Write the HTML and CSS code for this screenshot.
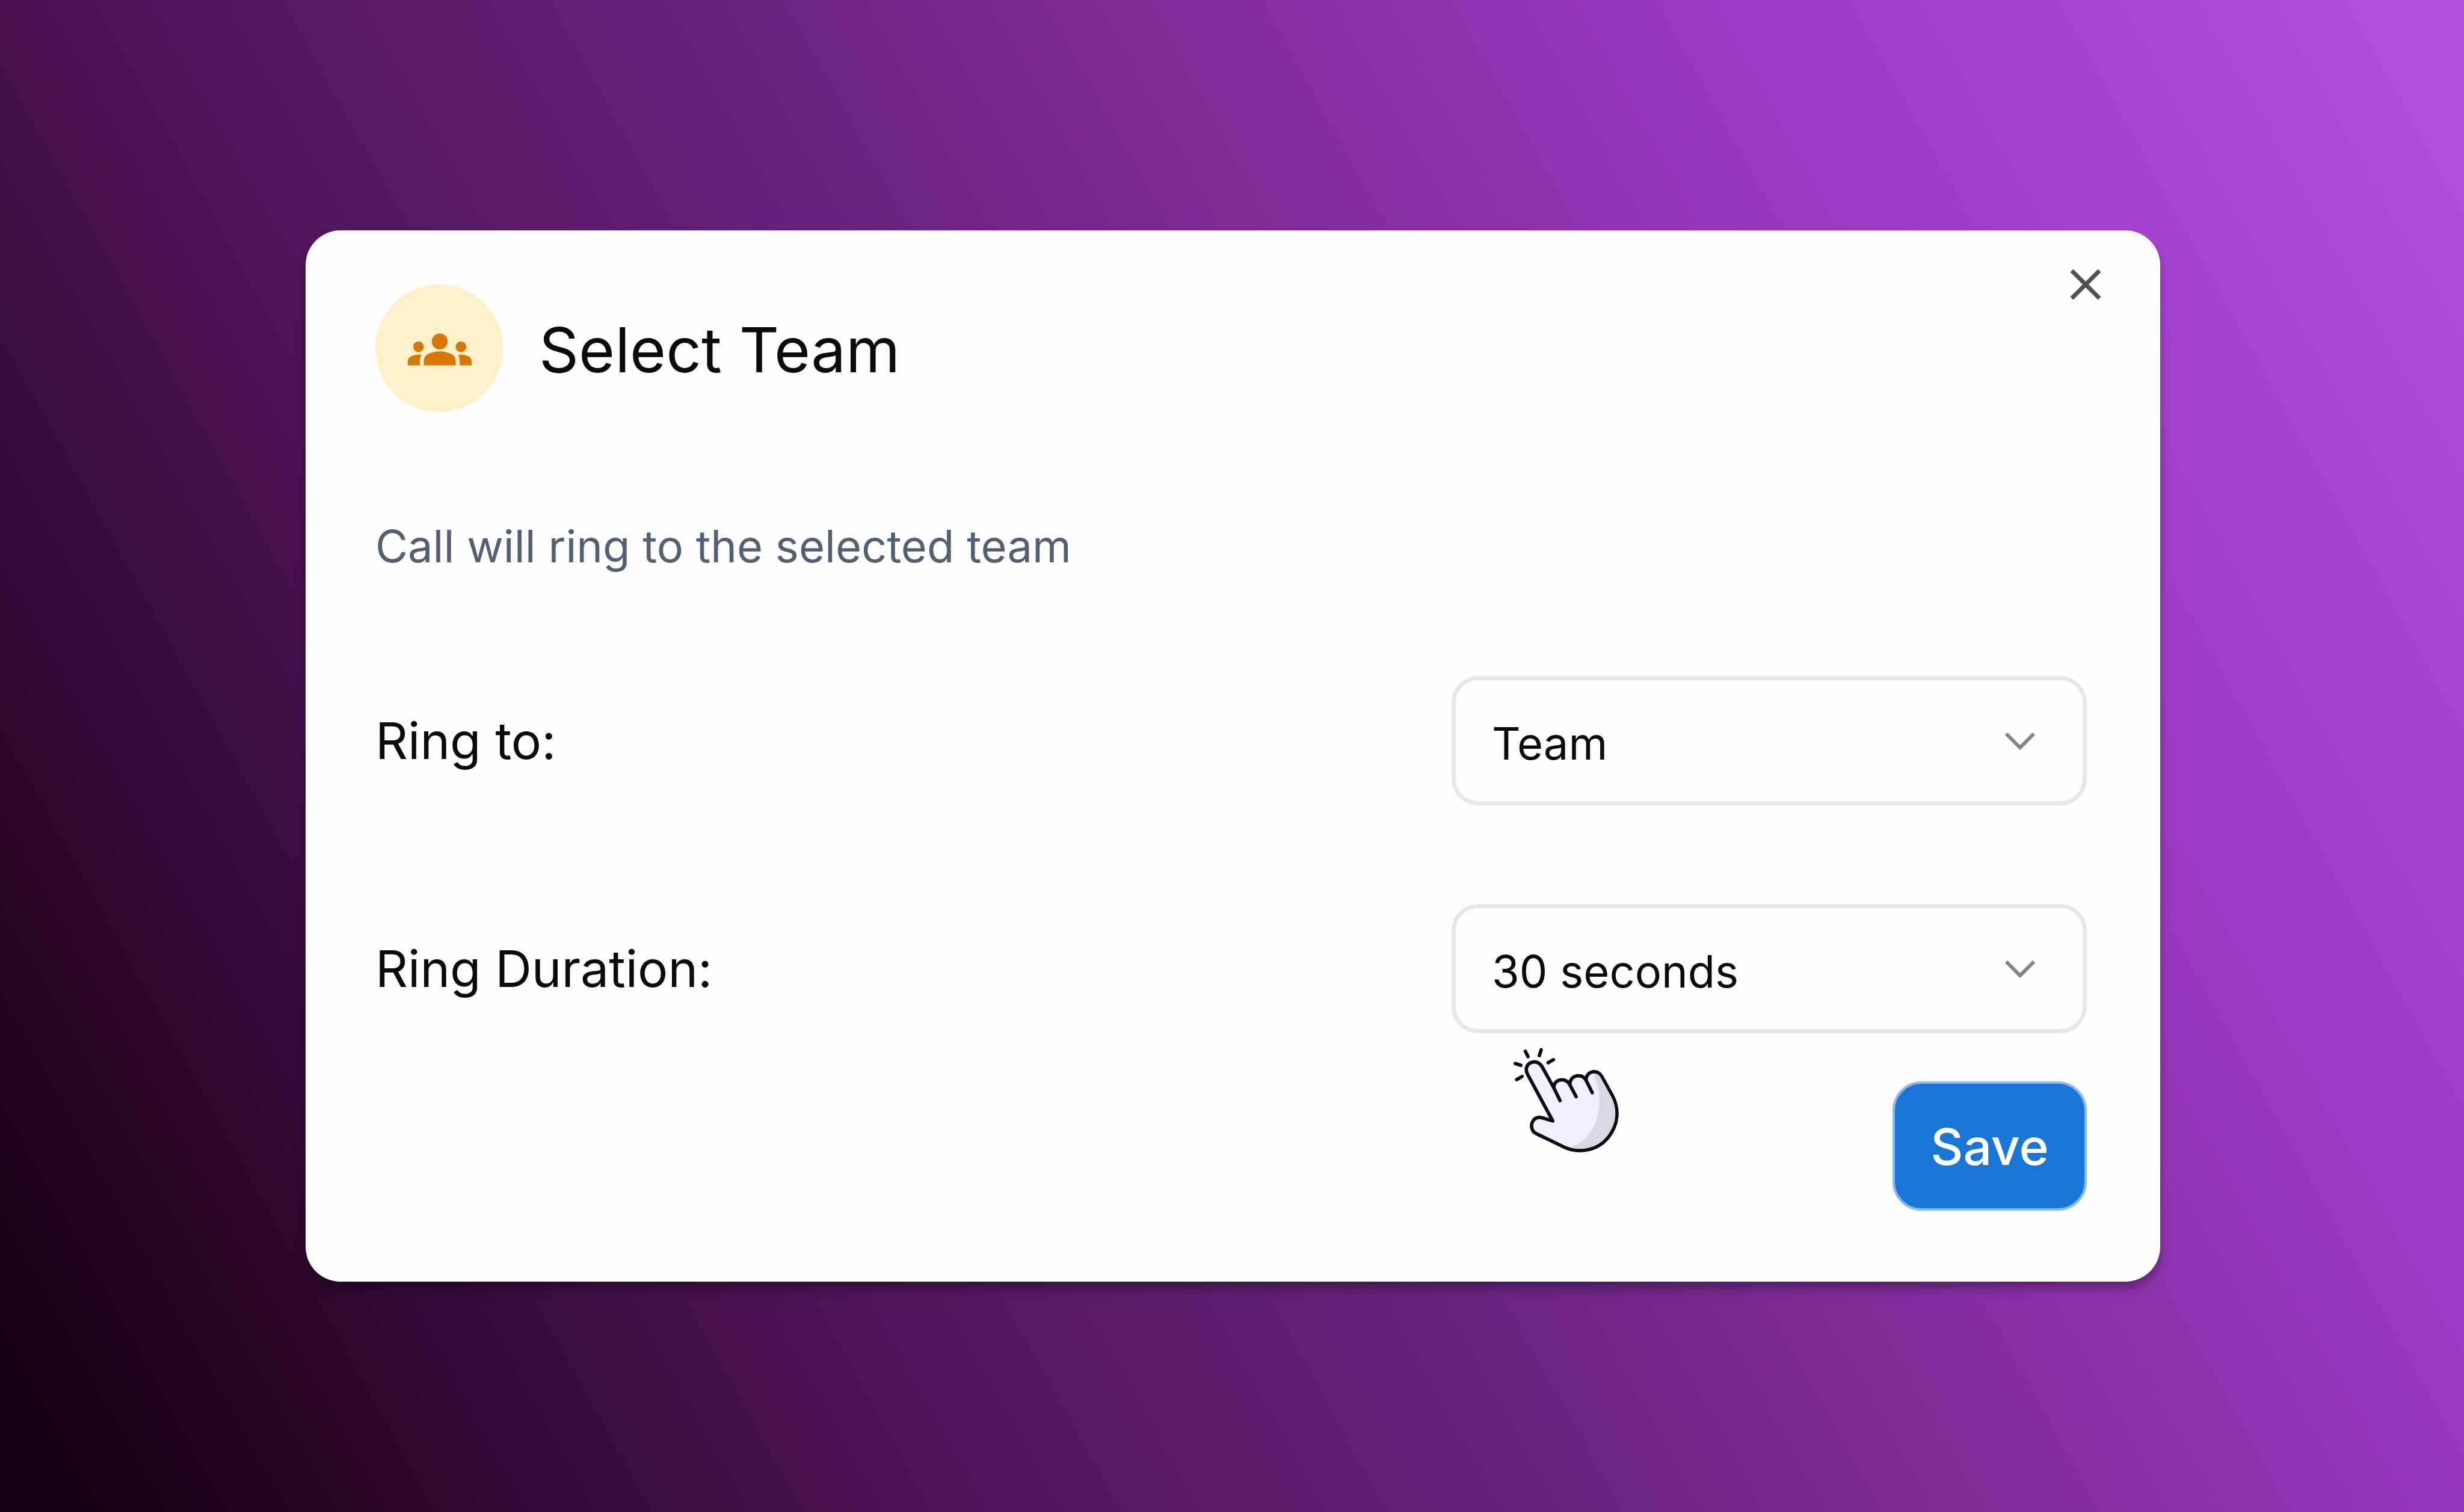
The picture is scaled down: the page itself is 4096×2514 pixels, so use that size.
FILE: index.html
```html
<!DOCTYPE html>
<html lang="en">
<head>
<meta charset="utf-8">
<meta name="viewport" content="width=device-width, initial-scale=1">
<title>Select Team</title>
<link rel="stylesheet" href="styles.css">
</head>
<body>
<main class="dialog" role="dialog" aria-labelledby="dialog-title">
  <header class="dialog-header">
    <span class="badge">
      <svg class="badge-icon" viewBox="0 0 24 24" aria-hidden="true"><path d="M12 12.75c1.63 0 3.07.39 4.24.9 1.08.48 1.76 1.56 1.76 2.73V18H6v-1.61c0-1.18.68-2.26 1.76-2.73 1.17-.52 2.61-.91 4.24-.91zM4 13c1.1 0 2-.9 2-2s-.9-2-2-2-2 .9-2 2 .9 2 2 2zm1.13 1.1c-.37-.06-.74-.1-1.13-.1-.99 0-1.93.21-2.78.58C.48 14.9 0 15.62 0 16.43V18h4.5v-1.61c0-.83.23-1.61.63-2.29zM20 13c1.1 0 2-.9 2-2s-.9-2-2-2-2 .9-2 2 .9 2 2 2zm4 3.43c0-.81-.48-1.53-1.22-1.85-.85-.37-1.79-.58-2.78-.58-.39 0-.76.04-1.13.1.4.68.63 1.46.63 2.29V18H24v-1.57zM12 6c1.66 0 3 1.34 3 3s-1.34 3-3 3-3-1.34-3-3 1.34-3 3-3z"/></svg>
    </span>
    <h1 class="title" id="dialog-title">Select Team</h1>
    <button class="close" type="button" aria-label="Close">
      <svg class="close-icon" viewBox="0 0 54 54" aria-hidden="true"><path d="M4 4 50 50M50 4 4 50"/></svg>
    </button>
  </header>
  <p class="description">Call will ring to the selected team</p>
  <form class="form">
    <div class="field">
      <label class="label" for="ring-to">Ring to:</label>
      <span class="select-box">
        <select class="select" id="ring-to"><option>Team</option></select>
        <svg class="chevron" viewBox="0 0 52 32" aria-hidden="true"><path d="M3 4 26 27 49 4"/></svg>
      </span>
    </div>
    <div class="field">
      <label class="label" for="ring-duration">Ring Duration:</label>
      <span class="select-box">
        <select class="select" id="ring-duration"><option>30 seconds</option></select>
        <svg class="chevron" viewBox="0 0 52 32" aria-hidden="true"><path d="M3 4 26 27 49 4"/></svg>
      </span>
    </div>
    <div class="actions">
      <button class="save" type="button">Save</button>
    </div>
  </form>
  <svg class="pointer" viewBox="0 0 900 840" aria-hidden="true">
    <path class="hand" d="M356 573 188 262C166 222 184 189 215 179C244 170 270 184 284 208L364 352C360 318 386 297 415 296C441 295 459 308 471 330C469 293 496 270 525 269C550 268 570 280 580 301C577 267 602 243 632 242C656 242 673 254 685 274L756 402C806 497 794 598 731 679C660 770 535 795 434 749L243 657C212 641 207 600 221 577C237 548 264 546 288 552Z"/>
    <path class="shade" d="M627 254C648 252 666 262 676 279L747 408C793 495 785 591 722 671C662 748 563 776 480 748C560 722 626 645 652 560C686 450 668 332 627 254Z"/>
    <path class="stroke" d="M364 352 405 436M471 330 513 410M580 301 621 383M172 105 190 141M278 95 266 134M361 161 325 182M104 187 142 199M114 295 150 274"/>
  </svg>
</main>
</body>
</html>
```
FILE: styles.css
```css
* {
  box-sizing: border-box;
}

body {
  margin: 0;
  min-height: 100vh;
  padding: 0 505px 0 508px;
  display: flex;
  align-items: center;
  font-family: Inter, "Liberation Sans", sans-serif;
  font-optical-sizing: none;
  color: #0b0b0d;
  background: linear-gradient(61deg, #1a0010 3%, #260420 9%, #340a38 16%, #48104f 25%, #5d1d6e 40%, #75278c 54%, #8930a6 65%, #9a3ac0 77%, #a944d4 89%, #b54fe0 100%);
}

.dialog {
  position: relative;
  flex: 1;
  padding: 90px 122px 118px 116px;
  border-radius: 58px;
  background: #fefefe;
  box-shadow: 0 12px 16px rgba(0, 0, 0, 0.3);
}

.dialog-header {
  display: flex;
  align-items: center;
  gap: 60px;
}

.badge {
  display: flex;
  align-items: center;
  justify-content: center;
  width: 212px;
  height: 212px;
  padding: 4px 0 0 2px;
  border-radius: 50%;
  background: #fef0c8;
}

.badge-icon {
  width: 106px;
  height: 106px;
  fill: #d97706;
}

.title {
  margin: 0;
  padding-top: 6px;
  font-size: 103px;
  line-height: 128px;
  font-weight: 400;
}

.close {
  align-self: flex-start;
  display: flex;
  margin: -27px -25px 0 auto;
  padding: 0;
  border: 0;
  background: none;
}

.close-icon {
  width: 54px;
  height: 54px;
  fill: none;
  stroke: #505052;
  stroke-width: 7;
}

.description {
  margin: 178px 0 0;
  font-size: 74px;
  line-height: 90px;
  color: #526073;
}

.form {
  display: flex;
  flex-direction: column;
  gap: 164px;
  margin-top: 171px;
}

.field {
  display: flex;
  align-items: center;
  justify-content: space-between;
}

.label {
  font-size: 84px;
  line-height: 104px;
}

.select-box {
  display: grid;
  align-items: center;
  width: 1056px;
}

.select {
  grid-area: 1 / 1;
  width: 100%;
  height: 215px;
  padding: 8px 60px 0;
  border: 7px solid #e5e7ec;
  border-radius: 44px;
  appearance: none;
  background: #fefefe;
  color: inherit;
  font: inherit;
  font-size: 74px;
}

.chevron {
  grid-area: 1 / 1;
  justify-self: end;
  width: 52px;
  height: 32px;
  margin-right: 85px;
  fill: none;
  stroke: #848487;
  stroke-width: 6;
  pointer-events: none;
}

.actions {
  display: flex;
  justify-content: flex-end;
  margin-top: -84px;
}

.save {
  width: 323px;
  height: 215px;
  padding: 2px 0 0;
  border: 4px solid #8cb9ea;
  border-radius: 48px;
  background: #1976d6;
  color: #fff;
  font: inherit;
  font-size: 84px;
  font-weight: 500;
}

.pointer {
  position: absolute;
  right: 875px;
  bottom: 201px;
  width: 223px;
  height: 208px;
}

.hand {
  fill: #f0effb;
}

.shade {
  fill: #d8d7e2;
}

.hand,
.stroke {
  stroke: #0d0c14;
  stroke-width: 23;
  stroke-linecap: round;
  stroke-linejoin: round;
}
```
